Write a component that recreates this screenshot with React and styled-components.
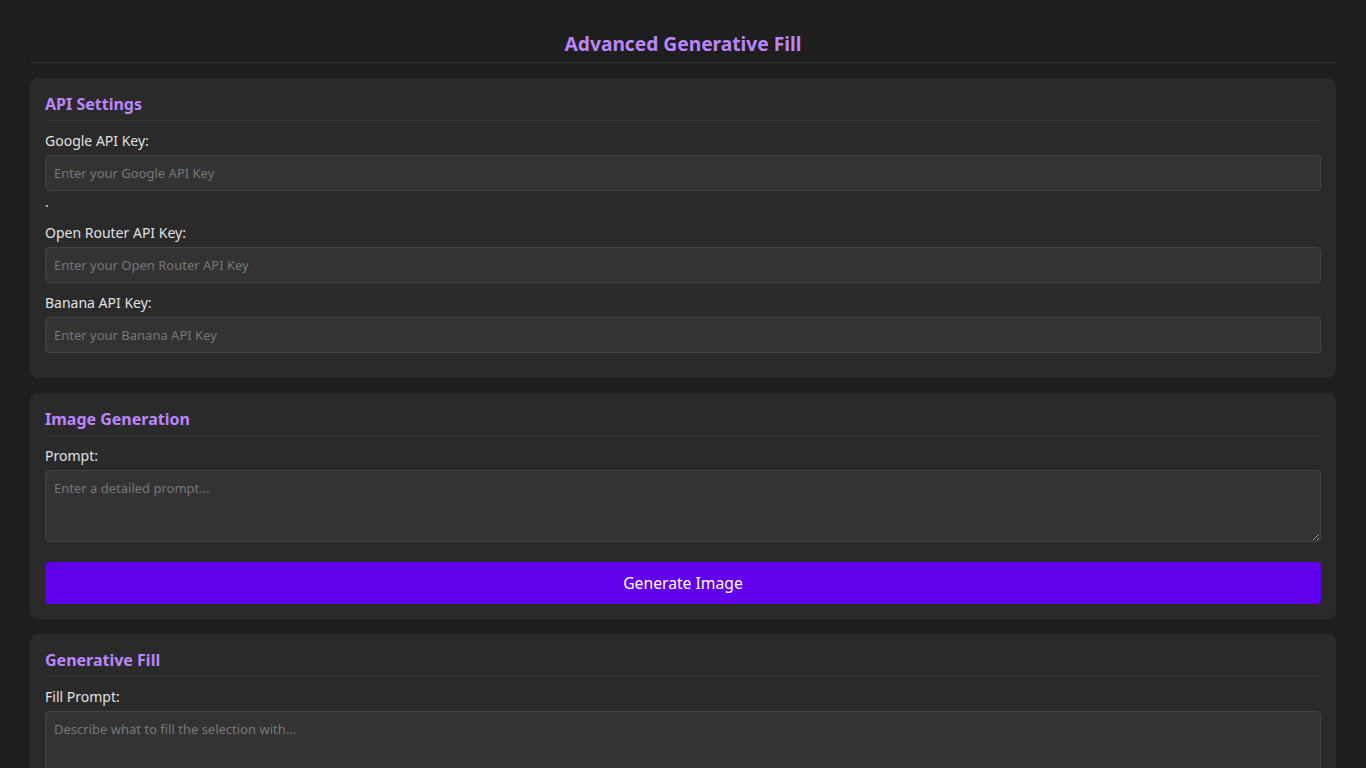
import React, { useState } from 'react';
import styled, { createGlobalStyle } from 'styled-components';

const GlobalStyle = createGlobalStyle`
  * {
    box-sizing: border-box;
  }
  body {
    margin: 0;
    background-color: #1e1e1e;
    color: #e0e0e0;
    font-family: 'Noto Sans', 'Open Sans', sans-serif;
  }
`;

const Page = styled.div`
  padding: 30px 30px 20px;
`;

const Header = styled.h1`
  margin: 0 0 15px;
  padding-bottom: 5px;
  font-size: 19.2px;
  font-weight: 700;
  line-height: 27px;
  text-align: center;
  color: #bb86fc;
  border-bottom: 1px solid #333333;
`;

const Panel = styled.section`
  background-color: #2a2a2a;
  border-radius: 8px;
  padding: 15px;
  margin-bottom: 15px;
`;

const PanelTitle = styled.h3`
  margin: 0 0 10px;
  padding-bottom: 5px;
  font-size: 16px;
  font-weight: 700;
  line-height: 22px;
  color: #bb86fc;
  border-bottom: 1px solid #333333;
`;

const FormGroup = styled.div`
  margin-bottom: 10px;
  font-size: 14px;
  line-height: 22px;
`;

const Label = styled.label`
  display: block;
  margin-bottom: 5px;
  font-size: 14px;
  line-height: 19px;
  color: #e0e0e0;
`;

const Input = styled.input`
  display: block;
  width: 100%;
  height: 36px;
  padding: 8px;
  font-family: inherit;
  font-size: 13px;
  color: #e0e0e0;
  background-color: #333333;
  border: 1px solid #444444;
  border-radius: 4px;
  outline: none;

  &::placeholder {
    color: #777777;
  }

  &:focus {
    border-color: #bb86fc;
  }
`;

const TextArea = styled.textarea`
  display: block;
  width: 100%;
  height: 72px;
  padding: 8px;
  font-family: inherit;
  font-size: 13px;
  line-height: 18px;
  color: #e0e0e0;
  background-color: #333333;
  border: 1px solid #444444;
  border-radius: 4px;
  outline: none;

  &::placeholder {
    color: #777777;
  }
`;

const Button = styled.button`
  display: block;
  width: 100%;
  margin-top: 20px;
  padding: 10px;
  font-family: inherit;
  font-size: 15.7px;
  line-height: 22px;
  color: #ffffff;
  background-color: #6200ee;
  border: none;
  border-radius: 4px;
  cursor: pointer;

  &:hover {
    background-color: #7722ff;
  }
`;

const App = () => {
  const [googleKey, setGoogleKey] = useState('');
  const [routerKey, setRouterKey] = useState('');
  const [bananaKey, setBananaKey] = useState('');
  const [prompt, setPrompt] = useState('');
  const [fillPrompt, setFillPrompt] = useState('');

  return (
    <Page>
      <GlobalStyle />
      <Header>Advanced Generative Fill</Header>

      <Panel>
        <PanelTitle>API Settings</PanelTitle>
        <FormGroup>
          <Label>Google API Key:</Label>
          <Input
            type="text"
            placeholder="Enter your Google API Key"
            value={googleKey}
            onChange={(e) => setGoogleKey(e.target.value)}
          />
          .
        </FormGroup>
        <FormGroup>
          <Label>Open Router API Key:</Label>
          <Input
            type="text"
            placeholder="Enter your Open Router API Key"
            value={routerKey}
            onChange={(e) => setRouterKey(e.target.value)}
          />
        </FormGroup>
        <FormGroup>
          <Label>Banana API Key:</Label>
          <Input
            type="text"
            placeholder="Enter your Banana API Key"
            value={bananaKey}
            onChange={(e) => setBananaKey(e.target.value)}
          />
        </FormGroup>
      </Panel>

      <Panel>
        <PanelTitle>Image Generation</PanelTitle>
        <FormGroup>
          <Label>Prompt:</Label>
          <TextArea
            placeholder="Enter a detailed prompt..."
            value={prompt}
            onChange={(e) => setPrompt(e.target.value)}
          />
        </FormGroup>
        <Button type="button">Generate Image</Button>
      </Panel>

      <Panel>
        <PanelTitle>Generative Fill</PanelTitle>
        <FormGroup>
          <Label>Fill Prompt:</Label>
          <TextArea
            placeholder="Describe what to fill the selection with..."
            value={fillPrompt}
            onChange={(e) => setFillPrompt(e.target.value)}
          />
        </FormGroup>
        <Button type="button">Apply Fill</Button>
      </Panel>
    </Page>
  );
};

export default App;
